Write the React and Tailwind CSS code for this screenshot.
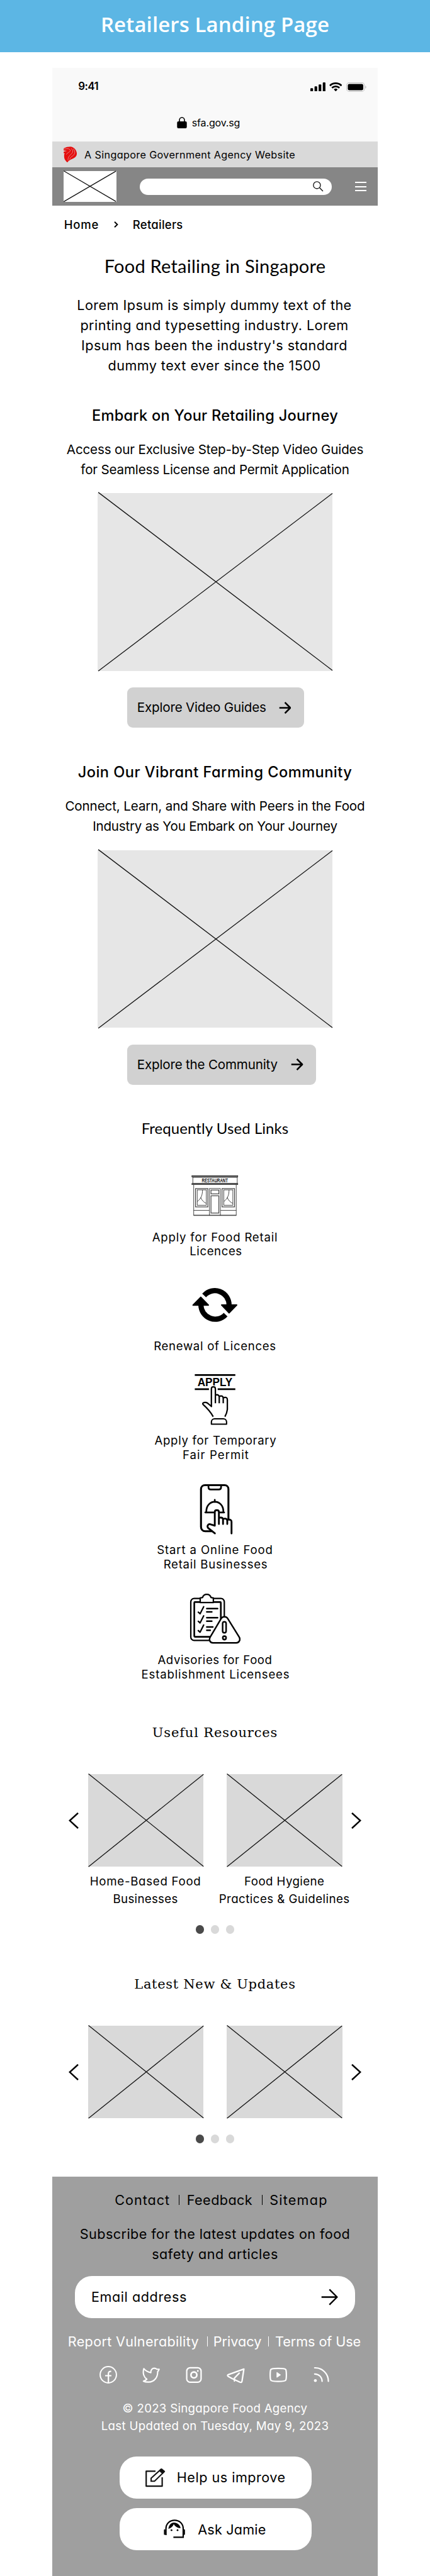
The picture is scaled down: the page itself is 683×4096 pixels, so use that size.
import React from 'react';

const geo = "[font-feature-settings:'cv11']";

/* Placeholder box with crossing diagonals */
function Placeholder({ className }) {
  return (
    <div className={className}>
      <svg className="block h-full w-full overflow-visible" viewBox="0 0 100 100" preserveAspectRatio="none">
        <g stroke="#111" strokeWidth="1.3" fill="none">
          <path vectorEffect="non-scaling-stroke" d="M0.3 -0.4 L100 99.8" />
          <path vectorEffect="non-scaling-stroke" d="M100 0.2 L0.3 100.2" />
        </g>
      </svg>
    </div>
  );
}

function Arrow({ className, strokeWidth }) {
  return (
    <svg className={className} viewBox="0 0 20 20" fill="none" stroke="#000" strokeWidth={strokeWidth} strokeLinecap="butt" strokeLinejoin="round">
      <path d="M0.5 10H18.6M9.8 1L18.8 10L9.8 19" />
    </svg>
  );
}

function StatusBar() {
  return (
    <div className="flex h-6 items-center justify-between pl-[41.5px] pr-[18.5px]">
      <span className="text-[16.9px] font-semibold leading-6 tracking-[-0.57px]">9:41</span>
      <div className="flex items-center pt-[2px]">
        <svg className="h-[14.5px] w-6" viewBox="0 0 24 14.5">
          <rect x="0" y="9.2" width="4.2" height="5.3" rx="1.1" />
          <rect x="6.6" y="6.3" width="4.2" height="8.2" rx="1.1" />
          <rect x="13.1" y="3.2" width="4.2" height="11.3" rx="1.1" />
          <rect x="19.7" y="0" width="4.2" height="14.5" rx="1.1" />
        </svg>
        <svg className="ml-[6px] h-[14.5px] w-[20.5px]" viewBox="0 0 20.5 14.5">
          <g fill="none" stroke="#000" strokeWidth="2.7">
            <path d="M1 5.2A13.2 13.2 0 0 1 19.5 5.2" />
            <path d="M4.3 8.8A8.6 8.6 0 0 1 16.2 8.8" />
          </g>
          <path d="M7.3 11.2A4.4 4.4 0 0 1 13.2 11.2L10.25 14.4Z" />
        </svg>
        <svg className="ml-[6.5px] h-[15px] w-[32px]" viewBox="0 0 32 15">
          <rect x="0.6" y="0.6" width="28.2" height="13.8" rx="4" fill="#fff" stroke="#c4c4c4" strokeWidth="1.1" />
          <rect x="2.4" y="2.4" width="24.6" height="10.2" rx="2.4" />
          <path d="M30.3 5.2C32 5.9 32 9.1 30.3 9.8Z" fill="#b5b5b5" />
        </svg>
      </div>
    </div>
  );
}

function Lion() {
  return (
    <svg className="h-[25.5px] w-[21px]" viewBox="0 0 48 104" preserveAspectRatio="none">
      <path fill="#e60f0f" d="M1 11C8 3 20 0 27 1C38 5 49 26 48 49C47 72 32 79 24 87C19 92 15 98 14 104C9 97 2 82 2 66L2 50L5 46L0 43L1 33L12 29L0 25Z" />
      <g fill="none" stroke="#d9d9d9" strokeWidth="1.6">
        <path d="M2 17C14 12 22 13 24 24C26 36 13 38 10 52" />
        <path d="M27 12C37 26 34 40 26 52C18 64 16 74 16 90" />
        <path d="M35 14C44 34 42 50 32 62C26 69 23 76 22 84" />
      </g>
    </svg>
  );
}

function Header() {
  return (
    <>
      <div className="bg-[#f9f9f9] pb-[18px] pt-[17px]">
        <StatusBar />
        <div className="mt-[34px] flex h-6 items-center gap-[8px] pl-[198px]">
          <svg className="h-[18px] w-4 shrink-0" viewBox="0 0 16 18">
            <path d="M4 8V5.2A4 4.4 0 0 1 12 5.2V8" fill="none" stroke="#000" strokeWidth="1.6" />
            <rect x="0.3" y="7" width="15.4" height="11" rx="2" />
          </svg>
          <span className="text-[16px] leading-6 tracking-[-0.15px]">sfa.gov.sg</span>
        </div>
      </div>
      <div className="flex h-[41px] items-center gap-[11.5px] bg-[#d9d9d9] pl-[18.7px]">
        <Lion />
        <span className={`${geo} pt-[1px] text-[16.2px] leading-6 tracking-[0.36px]`}>A Singapore Government Agency Website</span>
      </div>
      <div className="flex h-[61px] items-center bg-[#868686] pl-[18.7px] pr-[18.5px]">
        <Placeholder className="h-[48.5px] w-[83.2px] bg-white" />
        <div className="ml-[37px] flex h-[26px] w-[305px] items-center justify-end rounded-full bg-white pr-[13px]">
          <svg className="h-[16.5px] w-[16.5px]" viewBox="0 0 16.5 16.5" fill="none" stroke="#111" strokeWidth="1.3">
            <circle cx="6.4" cy="6.4" r="5.6" />
            <path d="M10.5 10.5L16 16" />
          </svg>
        </div>
        <div className="ml-auto flex w-[18px] flex-col gap-[4.3px]">
          <span className="h-[2px] bg-white" />
          <span className="h-[2px] bg-white" />
          <span className="h-[2px] bg-white" />
        </div>
      </div>
    </>
  );
}

function Guide({ title, titleClass, lines, button, buttonClass }) {
  return (
    <section className="flex flex-col">
      <h2 className={`${geo} text-center text-[23.6px] font-medium leading-8 ${titleClass}`}>{title}</h2>
      <div className="mt-[22px] text-center text-[20.6px] leading-8">
        {lines.map(([text, cls]) => (
          <p key={text} className={`whitespace-nowrap ${cls}`}>{text}</p>
        ))}
      </div>
      <Placeholder className="ml-[72.3px] mt-[21.2px] h-[282.5px] w-[373px] bg-[#e6e6e6]" />
      <div className={`ml-[119px] mt-[26.6px] flex h-16 items-center justify-between rounded-[9px] bg-[#d1d1d1] pl-[16px] pr-[20.5px] ${buttonClass}`}>
        <span className="whitespace-nowrap text-[20.6px] leading-8 tracking-[-0.19px]">{button}</span>
        <Arrow className="h-[19px] w-[19.5px]" strokeWidth={2.7} />
      </div>
    </section>
  );
}

function RestaurantIcon() {
  return (
    <svg className="mx-auto h-[67.6px] w-[74.5px]" viewBox="600 120 364 320" fill="none" stroke="#222" strokeWidth="4">
      <rect x="604" y="126" width="356" height="11" fill="#777" />
      <rect x="611" y="139" width="345" height="48" />
      <rect x="604" y="187" width="356" height="9" fill="#777" />
      <text x="782" y="178" textAnchor="middle" textLength="202" lengthAdjust="spacingAndGlyphs" fontFamily="Liberation Sans" fontWeight="700" fontSize="42" fill="#111" stroke="none">RESTAURANT</text>
      <path d="M618 197V436H948V197M618 396H740M826 396H948M740 436V226H825V436" />
      <path d="M618 433H948" />
      <rect x="632" y="227" width="96" height="142" stroke="#444" strokeWidth="6" />
      <rect x="645" y="237" width="71" height="119" />
      <path d="M686 238C686 270 680 300 646 328M672 296C680 318 700 336 716 342" />
      <rect x="838" y="227" width="97" height="142" stroke="#444" strokeWidth="6" />
      <rect x="851" y="237" width="71" height="119" />
      <path d="M892 238C892 270 886 300 852 328M878 296C886 318 906 336 922 342" />
      <rect x="752" y="238" width="61" height="30" stroke="#444" strokeWidth="6" />
      <rect x="752" y="283" width="61" height="134" stroke="#444" strokeWidth="6" />
    </svg>
  );
}

function RenewIcon() {
  return (
    <svg className="mx-auto h-[56.2px] w-[72.4px]" viewBox="608 970 354 266" preserveAspectRatio="none">
      <g fill="none" stroke="#000" strokeWidth="40">
        <path d="M702 1031A111 109 0 0 1 896 1104" />
        <path d="M869 1175A111 109 0 0 1 677 1102" />
      </g>
      <g stroke="#000" strokeWidth="10" strokeLinejoin="round">
        <path d="M838 1103H955L896 1162Z" />
        <path d="M616 1104H735L676 1044Z" />
      </g>
    </svg>
  );
}

function ApplyIcon() {
  return (
    <svg className="mx-auto h-[82.4px] w-[65.4px]" viewBox="626 100 320 390" preserveAspectRatio="none" fill="none" stroke="#000" strokeWidth="11" strokeLinejoin="round">
      <text x="785" y="194" textAnchor="middle" textLength="272" lengthAdjust="spacingAndGlyphs" fontFamily="Liberation Sans" fontWeight="700" fontSize="86" fill="#000" stroke="none">APPLY</text>
      <path d="M628 111H943M628 218H738M806 218H943" strokeWidth="13" />
      <path stroke="#fff" fill="#fff" strokeWidth="26" d="M755 350V215C755 197 787 197 787 215V300H765Z" />
      <path strokeLinecap="butt" d="M771 425C750 385 722 358 692 332C684 322 700 314 718 318C730 322 742 335 757 348V215C757 195 788 195 788 215V324M790 262C806 256 818 262 818 278V324M820 271C838 264 849 272 849 288V324M851 282C872 274 882 284 881 298V370C878 395 872 408 862 425" />
      <path d="M757 481V466C757 450 768 441 782 441H850C864 441 875 450 875 466V481Z" strokeWidth="10" />
    </svg>
  );
}

function OnlineIcon() {
  return (
    <svg className="mx-auto h-[81.7px] w-[53px]" viewBox="666 928 259 387" preserveAspectRatio="none" fill="none" stroke="#000" strokeWidth="15" strokeLinejoin="round" strokeLinecap="round">
      <path d="M762 1287H710C690 1287 677 1272 677 1255V970C677 952 690 940 708 940H860C878 940 890 952 890 970V1195" />
      <path d="M735 942V955C735 966 742 972 752 972H815C826 972 833 966 833 955V942" strokeWidth="13" />
      <path d="M784 1050V1066M718 1140C718 1040 851 1040 851 1140M710 1145H776M825 1145H857" strokeWidth="13" />
      <path d="M785 1303L733 1263C722 1252 730 1230 748 1234L784 1245V1142C784 1124 816 1124 816 1142V1232M818 1186C838 1180 848 1186 848 1202V1232M850 1194C870 1188 881 1194 881 1208V1232M883 1200C904 1196 914 1202 914 1216V1303" strokeWidth="14" />
    </svg>
  );
}

function AdvisoryIcon() {
  return (
    <svg className="mx-auto h-[81.5px] w-[81.5px]" viewBox="585 284 398 386" preserveAspectRatio="none" fill="none" stroke="#000" strokeWidth="11" strokeLinejoin="round" strokeLinecap="round">
      <rect x="595" y="325" width="260" height="316" rx="26" />
      <rect x="622" y="352" width="206" height="262" rx="5" strokeWidth="13" />
      <path fill="#fff" d="M668 356V321L686 318C696 286 742 286 752 318L770 321V356Z" />
      <g strokeWidth="11">
        <path d="M653 428L667 440L695 387M653 497L667 509L695 456M653 567L667 579L695 525" />
        <path d="M719 401H803M719 426H758M719 470H803M719 496H758M719 540H766M719 565H746" strokeWidth="12" />
      </g>
      <path fill="#fff" strokeWidth="12" d="M832 474C842 459 870 459 880 474L970 615C982 634 972 659 948 659H766C742 659 734 634 746 615Z" />
      <rect x="842" y="501" width="27" height="83" rx="13" strokeWidth="12" />
      <circle cx="856" cy="622" r="13" strokeWidth="12" />
    </svg>
  );
}

function QuickLinks() {
  return (
    <section className="text-center text-[18.6px] leading-[22.8px]">
      <h2 className="font-[Lato] text-[24px] font-normal leading-8 tracking-[0.07px]">Frequently Used Links</h2>
      <div className="mt-[57.5px] flex flex-col">
        <RestaurantIcon />
        <p className="mt-[20.6px] tracking-[0.8px]">Apply for Food Retail</p>
        <p className="ml-[3px] tracking-[0.6px]">Licences</p>
      </div>
      <div className="mt-[45.8px] flex flex-col">
        <RenewIcon />
        <p className="mt-[25.3px] tracking-[0.7px]">Renewal of Licences</p>
      </div>
      <div className="mt-[32.7px] flex flex-col">
        <ApplyIcon />
        <p className="ml-[2px] mt-[12.5px] tracking-[0.68px]">Apply for Temporary</p>
        <p className="ml-[3px] tracking-[1.05px]">Fair Permit</p>
      </div>
      <div className="mt-[34.4px] flex flex-col">
        <div className="pl-[5px]"><OnlineIcon /></div>
        <p className="mt-[12.9px] tracking-[0.88px]">Start a Online Food</p>
        <p className="ml-[2px] tracking-[0.75px]">Retail Businesses</p>
      </div>
      <div className="mt-[34.3px] flex flex-col">
        <AdvisoryIcon />
        <p className="mt-[13.1px] tracking-[0.55px]">Advisories for Food</p>
        <p className="ml-[2px] tracking-[0.82px]">Establishment Licensees</p>
      </div>
    </section>
  );
}

function Chevron({ className, d }) {
  return (
    <svg className={className} viewBox="0 0 16 26" fill="none" stroke="#000" strokeWidth="2.5">
      <path d={d} />
    </svg>
  );
}

function Carousel({ title, titleClass, captions, dotsClass }) {
  return (
    <section className="flex flex-col">
      <h2 className={`text-center font-['DejaVu_Serif'] text-[21px] leading-8 ${titleClass}`}>{title}</h2>
      <div className="mt-[50px] flex items-center pl-[26px]">
        <Chevron className="h-[26px] w-4" d="M15 0.8L1.8 12.8L15 25" />
        <Placeholder className="ml-[15px] h-[147px] w-[183.3px] bg-[#d9d9d9]" />
        <Placeholder className="ml-[37.3px] h-[147px] w-[183.3px] bg-[#d9d9d9]" />
        <Chevron className="ml-[14.5px] h-[26px] w-4" d="M1 0.8L14.2 12.8L1 25" />
      </div>
      {captions && (
        <div className={`${geo} mt-[9.4px] flex pl-[38px] text-center text-[18.7px] leading-7`}>
          {captions.map((lines) => (
            <div key={lines[0][0]} className="w-[220.6px]">
              {lines.map(([text, cls]) => (
                <p key={text} className={`whitespace-nowrap ${cls}`}>{text}</p>
              ))}
            </div>
          ))}
        </div>
      )}
      <div className={`flex justify-center gap-[10.3px] ${dotsClass}`}>
        <span className="h-[13.6px] w-[13.6px] rounded-full bg-[#4a4a4a]" />
        <span className="h-[13.6px] w-[13.6px] rounded-full bg-[#d9d9d9]" />
        <span className="h-[13.6px] w-[13.6px] rounded-full bg-[#d9d9d9]" />
      </div>
    </section>
  );
}

function SocialIcons() {
  return (
    <div className="mt-[23.3px] flex h-7 items-center pl-[75px]">
      <svg className="h-7 w-7" viewBox="0 0 28 28" fill="none" stroke="#fff" strokeWidth="2">
        <circle cx="14" cy="14" r="12.9" />
        <path d="M14.2 27V12.2C14.2 9.4 15.6 8.4 18.6 8.6M9 15.5H19" strokeWidth="2.2" />
      </svg>
      <svg className="ml-[40.6px] h-7 w-7" viewBox="0 0 28 28" fill="none" stroke="#fff" strokeWidth="2.1" strokeLinejoin="round">
        <path d="M26.8 5.2C26 7.6 25 8.4 24.4 9.2C24.6 17.5 19.6 25.6 10 25.6C6.4 25.6 3.4 25 1.8 24.2C3.6 23.6 5.8 22.8 7.2 21C2.8 18.4 0.2 12 2.4 4.2C4.6 7 8.6 10 13.6 10.6C13.2 6.2 16 3.6 19 3.6C20.8 3.6 22 4.2 23.2 5.2Z" />
      </svg>
      <svg className="ml-[39.8px] h-7 w-7" viewBox="0 0 28 28" fill="none" stroke="#fff" strokeWidth="2.2">
        <rect x="2.6" y="2.8" width="22.8" height="23" rx="5.4" />
        <circle cx="14" cy="14.3" r="4.7" strokeWidth="2.6" />
        <circle cx="20.2" cy="8" r="1.4" fill="#fff" stroke="none" />
      </svg>
      <svg className="ml-[38px] h-7 w-[30px]" viewBox="0 0 30 28" fill="none" stroke="#fff" strokeWidth="2.3" strokeLinejoin="round">
        <path d="M27.4 4.8L2.6 13.8C1 14.6 1.2 16 2.6 16.8L8.6 20L21 25.8C23 26.6 24.2 26 24.4 24.2Z" />
        <path d="M20 11.4L12.4 19.2V24" strokeLinecap="round" />
      </svg>
      <svg className="ml-[38px] h-7 w-7" viewBox="0 0 28 28" fill="none" stroke="#fff" strokeWidth="2.2">
        <path d="M14 3.8C22 3.8 25 4.2 25.8 5.6C27.2 8 27.2 20.4 25.8 22.8C25 24.2 22 24.6 14 24.6C6 24.6 3 24.2 2.2 22.8C0.8 20.4 0.8 8 2.2 5.6C3 4.2 6 3.8 14 3.8Z" />
        <path d="M11.8 10.2L17.6 14.2L11.8 18.2Z" fill="#fff" strokeWidth="1" strokeLinejoin="round" />
      </svg>
      <svg className="ml-[41px] h-7 w-7" viewBox="0 0 28 28" fill="none" stroke="#fff" strokeWidth="2.2" strokeLinecap="round">
        <path d="M2.8 3A21 21.4 0 0 1 24.6 24.4" />
        <path d="M2.8 12.8A11.4 11.6 0 0 1 14.6 24.4" />
        <circle cx="3.9" cy="23.2" r="2.3" fill="#fff" stroke="none" />
      </svg>
    </div>
  );
}

function EditIcon() {
  return (
    <svg className="h-[31px] w-[33px]" viewBox="0 0 33 31" fill="none" stroke="#111" strokeWidth="2.2">
      <path d="M17 5.4H2.2V29.2H27.6V15" strokeLinejoin="round" />
      <path d="M10 21.2V16.4L25.6 2.4L30.4 6.6L15.4 21.2Z" strokeWidth="2" />
      <path d="M22.6 5L26.8 0.8L32.4 5.4L28 9.8Z" fill="#111" stroke="none" />
    </svg>
  );
}

function AgentIcon() {
  return (
    <svg className="h-[31px] w-[34px]" viewBox="0 0 34 31" fill="none" stroke="#000" strokeWidth="2.2">
      <path d="M3.6 25V15C3.6 -3.2 31 -3.2 31 15V28.4H15.4" />
      <path d="M1.6 17V23.4M32.6 17V23.4" strokeWidth="2.4" strokeLinecap="round" />
      <path d="M7.4 15C8.4 8.4 12 5.2 16.2 5C21.6 5.2 25.8 8.8 27 13.8C21.8 13.8 17.8 11 16 7.4C14.6 11.2 11.6 14 7.4 15Z" fill="#000" stroke="none" />
      <circle cx="12.4" cy="17.2" r="1.4" fill="#000" stroke="none" />
      <circle cx="22" cy="17.2" r="1.4" fill="#000" stroke="none" />
    </svg>
  );
}

function Footer() {
  return (
    <footer className={`${geo} mt-[53.1px] h-[635.3px] bg-[#9f9f9f] pt-[21.4px] text-[21.6px] leading-8`}>
      <div className="flex items-center whitespace-nowrap pl-[99.4px]">
        <span className="w-[102px] tracking-[1px]">Contact</span>
        <span className="h-4 w-px bg-black" />
        <span className="ml-[11.6px] w-[119.5px] tracking-[0.43px]">Feedback</span>
        <span className="h-4 w-px bg-black" />
        <span className="ml-[11px] tracking-[1.2px]">Sitemap</span>
      </div>
      <div className="mt-[21.4px] text-center">
        <p className="tracking-[0.43px]">Subscribe for the latest updates on food</p>
        <p className="tracking-[0.5px]">safety and articles</p>
      </div>
      <div className="ml-[36.6px] mt-[19.4px] flex h-[66.6px] w-[444.6px] items-center justify-between rounded-[27px] bg-white pl-[25.5px] pr-[27px]">
        <span className="tracking-[0.58px]">Email address</span>
        <Arrow className="h-[27px] w-[27px]" strokeWidth={1.8} />
      </div>
      <div className="mt-[21.5px] flex items-center whitespace-nowrap pl-[25px] text-white">
        <span className="w-[221px] tracking-[0.32px]">Report Vulnerability</span>
        <span className="h-4 w-px bg-white" />
        <span className="ml-[9px] w-[87.6px] tracking-[0px]">Privacy</span>
        <span className="h-4 w-px bg-white" />
        <span className="ml-[9.6px] tracking-[-0.05px]">Terms of Use</span>
      </div>
      <SocialIcons />
      <div className="mt-[26px] text-center text-[18.7px] leading-7 text-white">
        <p className="tracking-[0.27px]">© 2023 Singapore Food Agency</p>
        <p className="tracking-[0.32px]">Last Updated on Tuesday, May 9, 2023</p>
      </div>
      <div className="ml-[107.4px] mt-[33.4px] flex h-[66.8px] w-[304.4px] items-center rounded-[27px] bg-white pl-[39.6px]">
        <EditIcon />
        <span className="ml-[18px] tracking-[0.5px]">Help us improve</span>
      </div>
      <div className="ml-[107.4px] mt-[15.7px] flex h-[67px] w-[304.4px] items-center rounded-[27px] bg-white pl-[70px]">
        <AgentIcon />
        <span className="ml-[20px] tracking-[0.2px]">Ask Jamie</span>
      </div>
    </footer>
  );
}

export default function App() {
  return (
    <div className="h-[4096px] w-[683px] overflow-hidden bg-white font-[Inter,sans-serif] text-black">
      <h1 className="h-[83px] bg-[#5cb6e4] text-center font-['Open_Sans'] text-[33px] font-semibold leading-[78px] tracking-[0.1px] text-white">Retailers Landing Page</h1>
      <main className="ml-[82.8px] mt-[25px] flex w-[517.4px] flex-col">
        <Header />
        <nav className={`${geo} mt-4 flex h-7 items-center pl-[19px] text-[18.5px] font-medium leading-7`}>
          <span className="w-[79px] tracking-[0.75px]">Home</span>
          <svg className="h-[10px] w-[7px]" viewBox="0 0 7 10" fill="none" stroke="#000" strokeWidth="1.9">
            <path d="M1 0.8L5.4 5L1 9.2" />
          </svg>
          <span className="ml-[23px] tracking-[0.26px]">Retailers</span>
        </nav>
        <h2 className="mt-8 text-center font-[Lato] text-[29px] leading-10 tracking-[0.24px]">Food Retailing in Singapore</h2>
        <div className={`${geo} mt-[26px] pr-[2px] text-center text-[21.6px] leading-8 tracking-[0.44px]`}>
          <p>Lorem Ipsum is simply dummy text of the</p>
          <p>printing and typesetting industry. Lorem</p>
          <p>Ipsum has been the industry's standard</p>
          <p>dummy text ever since the 1500</p>
        </div>
        <div className="mt-12">
          <Guide
            title="Embark on Your Retailing Journey"
            titleClass="tracking-[0.25px]"
            lines={[
              ['Access our Exclusive Step-by-Step Video Guides', 'tracking-[-0.16px]'],
              ['for Seamless License and Permit Application', 'tracking-[-0.17px]'],
            ]}
            button="Explore Video Guides"
            buttonClass="w-[281px]"
          />
        </div>
        <div className="mt-[55.2px]">
          <Guide
            title="Join Our Vibrant Farming Community"
            titleClass="tracking-[0.46px]"
            lines={[
              ['Connect, Learn, and Share with Peers in the Food', 'tracking-[-0.12px]'],
              ['Industry as You Embark on Your Journey', 'tracking-[-0.22px]'],
            ]}
            button="Explore the Community"
            buttonClass="w-[300.5px]"
          />
        </div>
        <div className="mt-[53.2px]">
          <QuickLinks />
        </div>
        <div className="mt-[65.9px]">
          <Carousel
            title="Useful Resources"
            titleClass="tracking-[0.85px]"
            captions={[
              [['Home-Based Food', 'tracking-[0.7px]'], ['Businesses', 'tracking-[0.3px]']],
              [['Food Hygiene', 'tracking-[0.4px]'], ['Practices & Guidelines', 'tracking-[0.45px]']],
            ]}
            dotsClass="mt-[27.3px]"
          />
        </div>
        <div className="mt-[64.4px]">
          <Carousel title="Latest New & Updates" titleClass="tracking-[0.68px]" dotsClass="mt-[26px]" />
        </div>
        <Footer />
      </main>
    </div>
  );
}
